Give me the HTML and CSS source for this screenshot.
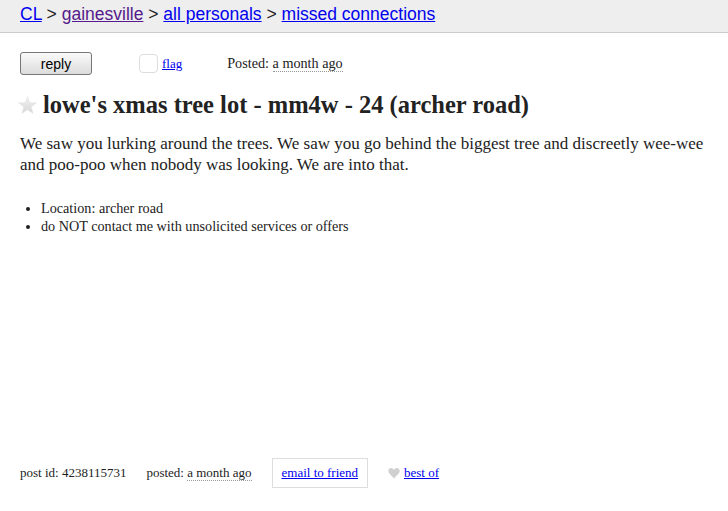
FILE: index.html
```html
<!DOCTYPE html>
<html lang="en">
<head>
    <meta charset="UTF-8">
    <title>lowe's xmas tree lot - mm4w - 24 (archer road)</title>
    <link rel="stylesheet" href="styles.css">
</head>
<body>
    <header class="crumbs">
        <a href="#">CL</a> &gt;
        <a href="#" class="visited">gainesville</a> &gt;
        <a href="#">all personals</a> &gt;
        <a href="#">missed connections</a>
    </header>
    <section class="page">
        <div class="actions">
            <button class="reply">reply</button>
            <span class="flag"><span class="flagbox"></span><a href="#">flag</a></span>
            <span class="posted">Posted: <time>a month ago</time></span>
        </div>
        <h2 class="title">
            <svg class="star" width="19" height="18" viewBox="0 0 20 19">
                <defs>
                    <linearGradient id="sg" x1="0" y1="0" x2="0" y2="1">
                        <stop offset="0" stop-color="#f2f2f2"/>
                        <stop offset="1" stop-color="#d6d6d6"/>
                    </linearGradient>
                </defs>
                <path d="M10 0.5 L12.4 7 L19.5 7.2 L13.9 11.5 L15.9 18.5 L10 14.4 L4.1 18.5 L6.1 11.5 L0.5 7.2 L7.6 7 Z" fill="url(#sg)" stroke="#e4e4e4" stroke-width="0.6"/>
            </svg>lowe's xmas tree lot - mm4w - 24 (archer road)</h2>
        <p class="body">We saw you lurking around the trees. We saw you go behind the biggest tree and discreetly wee-wee and poo-poo when nobody was looking. We are into that.</p>
        <ul class="notices">
            <li>Location: archer road</li>
            <li>do NOT contact me with unsolicited services or offers</li>
        </ul>
        <div class="footer">
            <span>post id: 4238115731</span>
            <span>posted: <time>a month ago</time></span>
            <span class="email"><a href="#">email to friend</a></span>
            <span class="best">
                <svg class="heart" width="12" height="12" viewBox="0 0 12 12">
                    <path d="M6 11.5 L1.2 6.3 C-0.5 4.4 0.3 1 3.1 1 C4.5 1 5.4 1.9 6 2.9 C6.6 1.9 7.5 1 8.9 1 C11.7 1 12.5 4.4 10.8 6.3 Z" fill="#d0d0d0"/>
                </svg><a href="#">best of</a>
            </span>
        </div>
    </section>
</body>
</html>
```
FILE: styles.css
```css
body{
    margin: 0;
    font-family: "Liberation Serif", "Times New Roman", serif;
    color: #222;
    background: #fff;
}
a{
    color: #00e;
}
a.visited{
    color: #551a8b;
}
.crumbs{
    background: #eee;
    border-bottom: 1px solid #ccc;
    font-family: "Liberation Sans", Arial, sans-serif;
    font-size: 17.5px;
    line-height: 29px;
    padding: 0 20px;
    box-sizing: border-box;
    height: 33px;
}
.page{
    padding: 0 20px;
}
.actions{
    display: flex;
    align-items: center;
    margin-top: 19px;
    font-size: 13px;
}
.reply{
    width: 72px;
    height: 23px;
    font-family: "Liberation Sans", Arial, sans-serif;
    font-size: 14px;
    color: #000;
    border: 1px solid #777;
    border-radius: 3px;
    background: linear-gradient(#fafafa, #dcdcdc);
    padding: 0;
}
.flag{
    display: flex;
    align-items: center;
    margin-left: 47px;
}
.flagbox{
    width: 17px;
    height: 17px;
    border: 1px solid #ddd;
    border-radius: 4px;
    margin-right: 4px;
}
.posted{
    margin-left: 45px;
    font-size: 14.2px;
}
time{
    border-bottom: 1px dotted #999;
}
.title{
    font-size: 24.5px;
    margin: 15px 0 0 -2px;
    line-height: 30px;
}
.star{
    margin-right: 6px;
    vertical-align: -1px;
}
.body{
    font-size: 17px;
    line-height: 21px;
    margin: 13px 0 0;
}
.notices{
    font-size: 14.2px;
    line-height: 18px;
    margin: 24px 0 0;
    padding-left: 21px;
}
.footer{
    display: flex;
    align-items: center;
    font-size: 13px;
    margin-top: 223px;
}
.footer > span{
    margin-right: 20px;
}
.email{
    border: 1px solid #ddd;
    padding: 6px 9px;
}
.best{
    display: flex;
    align-items: center;
}
.heart{
    margin-right: 4px;
}
```
